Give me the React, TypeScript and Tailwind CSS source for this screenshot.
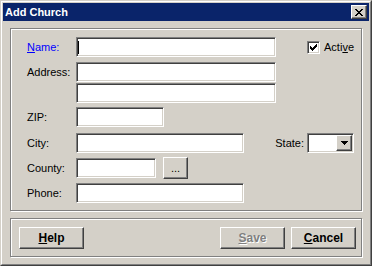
import React from 'react';

const sunken =
  'bg-white border border-t-[#808080] border-l-[#808080] border-b-white border-r-white shadow-[inset_1px_1px_0_#404040,inset_-1px_-1px_0_#d4d0c8]';
const raised =
  'bg-[#d4d0c8] border border-t-white border-l-white border-b-[#404040] border-r-[#404040] shadow-[inset_-1px_-1px_0_#808080]';
const etched = 'border border-[#808080] shadow-[inset_1px_1px_0_#fff,1px_1px_0_#fff]';

const Label: React.FC<{ children: React.ReactNode }> = ({ children }) => (
    <span className="w-[49px] shrink-0 text-[11px] leading-none text-black">{children}</span>
);

const Box: React.FC<{ w: string; children?: React.ReactNode }> = ({ w, children }) => (
    <div className={`${sunken} ${w} h-[20px] flex items-center`}>{children}</div>
);

const CloseGlyph = () => (
    <svg width="8" height="7" viewBox="0 0 8 7" shapeRendering="crispEdges">
        {[0, 1, 2, 3, 4, 5, 6].map((i) => (
            <g key={i}>
                <rect x={i} y={i} width="2" height="1" fill="#000" />
                <rect x={6 - i} y={i} width="2" height="1" fill="#000" />
            </g>
        ))}
    </svg>
);

const CheckGlyph = () => {
    const tops = [2, 3, 4, 3, 2, 1, 0];
    return (
        <svg width="7" height="7" viewBox="0 0 7 7" shapeRendering="crispEdges">
            {tops.map((t, c) => (
                <rect key={c} x={c} y={t} width="1" height="3" fill="#000" />
            ))}
        </svg>
    );
};

const Button: React.FC<{ children: React.ReactNode; disabled?: boolean }> = ({ children, disabled }) => (
    <div
        className={`${raised} w-[65px] h-[22px] flex items-center justify-center text-[12px] font-bold ${
            disabled ? 'text-[#808080] [text-shadow:1px_1px_0_#fff]' : 'text-black'
        }`}
    >
        {children}
    </div>
);

export default function App() {
    return (
        <div className="w-[372px] h-[266px] bg-[#d4d0c8] border border-t-[#d4d0c8] border-l-[#d4d0c8] border-b-[#404040] border-r-[#404040] font-['Liberation_Sans',Arial,sans-serif]">
            <div className="h-full flex flex-col p-px border border-t-white border-l-white border-b-[#808080] border-r-[#808080]">
                {/* title bar */}
                <div className="h-[18px] shrink-0 bg-[#0a246a] flex items-center justify-between pl-[2px] pr-[2px]">
                    <span className="text-white text-[11px] font-bold leading-none">Add Church</span>
                    <div className={`${raised} w-[16px] h-[14px] flex items-center justify-center`}>
                        <CloseGlyph />
                    </div>
                </div>

                <div className="flex-1 pl-[7px] pt-[7px]">
                    {/* form group */}
                    <div className={`${etched} w-[352px] h-[183px] pt-[8px] pl-[16px] pr-[7px] flex flex-col`}>
                        <div className="flex items-center h-[20px]">
                            <Label>
                                <span className="text-[#0000ff]">
                                    <span className="underline">N</span>ame:
                                </span>
                            </Label>
                            <Box w="w-[200px]">
                                <div className="ml-px w-px h-[13px] bg-black" />
                            </Box>
                            <div className="ml-auto flex items-center gap-[4px]">
                                <div className={`${sunken} w-[13px] h-[13px] flex items-center justify-center`}>
                                    <CheckGlyph />
                                </div>
                                <span className="text-[11px] leading-none">
                                    Acti<span className="underline">v</span>e
                                </span>
                            </div>
                        </div>

                        <div className="flex items-center h-[20px] mt-[5px]">
                            <Label>Address:</Label>
                            <Box w="w-[200px]" />
                        </div>
                        <div className="flex items-center h-[20px] mt-px">
                            <Label>{''}</Label>
                            <Box w="w-[200px]" />
                        </div>

                        <div className="flex items-center h-[20px] mt-[4px]">
                            <Label>ZIP:</Label>
                            <Box w="w-[88px]" />
                        </div>

                        <div className="flex items-center h-[20px] mt-[6px]">
                            <Label>City:</Label>
                            <Box w="w-[168px]" />
                            <span className="ml-auto mr-[3px] text-[11px] leading-none">State:</span>
                            <div className={`${sunken} w-[47px] h-[20px] flex justify-end items-center pr-px`}>
                                <div className={`${raised} w-[16px] h-[16px] flex items-center justify-center`}>
                                    <svg width="7" height="4" viewBox="0 0 7 4" shapeRendering="crispEdges">
                                        <polygon points="0,0 7,0 3.5,4" fill="#000" />
                                    </svg>
                                </div>
                            </div>
                        </div>

                        <div className="flex items-center h-[20px] mt-[5px]">
                            <Label>County:</Label>
                            <Box w="w-[80px]" />
                            <div className={`${raised} ml-[7px] w-[25px] h-[22px] flex items-center justify-center text-[11px] leading-none`}>
                                ...
                            </div>
                        </div>

                        <div className="flex items-center h-[20px] mt-[5px]">
                            <Label>Phone:</Label>
                            <Box w="w-[168px]" />
                        </div>
                    </div>

                    {/* button group */}
                    <div className={`${etched} w-[352px] h-[39px] mt-[7px] pl-[8px] pr-[5px] flex items-center`}>
                        <Button>
                            <span className="underline">H</span>elp
                        </Button>
                        <div className="ml-auto flex gap-[6px]">
                            <Button disabled>
                                <span className="underline">S</span>ave
                            </Button>
                            <Button>
                                <span className="underline">C</span>ancel
                            </Button>
                        </div>
                    </div>
                </div>
            </div>
        </div>
    );
}
